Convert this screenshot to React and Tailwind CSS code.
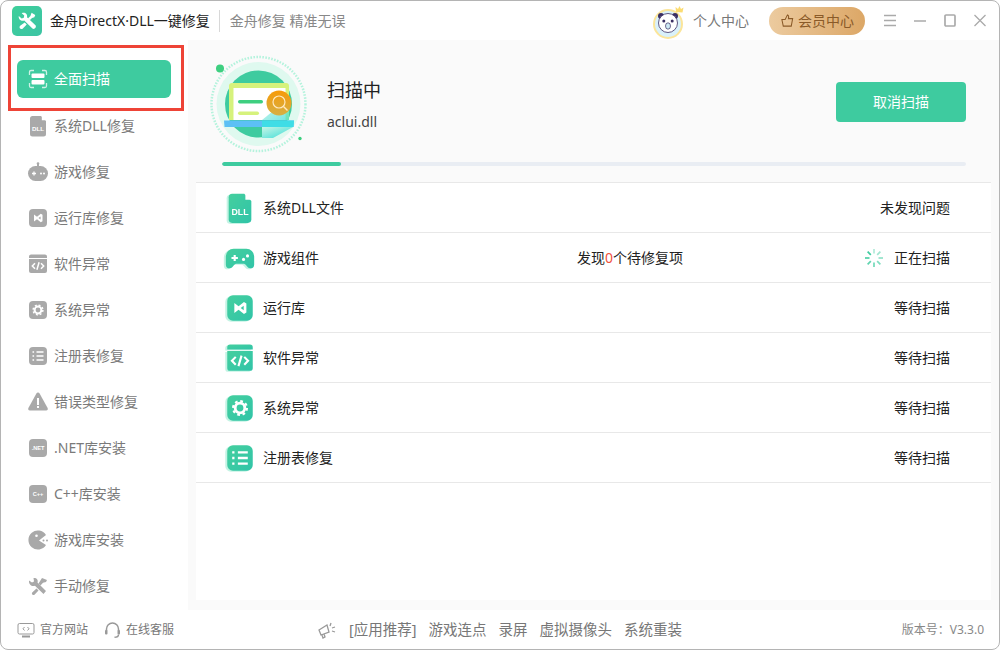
import React from "react";

const Doc = ({ c, t }) => (
    <>
        <path d="M6.500 2H15l5 5v13a2.500 2.500 0 0 1-2.500 2.500h-11A2.500 2.500 0 0 1 4 20V4.500A2.500 2.500 0 0 1 6.500 2z" fill={c} />
        <path d="M15.800 2l4.200 4.200h-4.200z" fill="#fff" />
        <text x="12" y="16.600" textAnchor="middle" fontSize="6.200" fontWeight="700" fontFamily="Liberation Sans" fill={t}>DLL</text>
    </>
);
const Game = ({ c, t }) => (
    <>
        <path d="M7.500 5.500h9a5.500 5.500 0 0 1 5.500 5.500v5.500a2.800 2.800 0 0 1-2.800 2.800c-1.500 0-2-1-3-2.300-.6-.7-1.200-1-2-1H9.800c-.8 0-1.400.3-2 1-1 1.300-1.500 2.300-3 2.300A2.800 2.800 0 0 1 2 16.500V11a5.500 5.500 0 0 1 5.500-5.500z" fill={c} />
        <path d="M6 12h4.500M8.250 9.800v4.400" stroke={t} strokeWidth="1.500" />
        <circle cx="14.500" cy="13" r="1.100" fill={t} />
        <circle cx="17.300" cy="10.500" r="1.100" fill={t} />
    </>
);
// the side menu uses a rounder pad with a nub on top
const Pad = ({ c, t }) => (
    <>
        <rect x="11" y="3" width="2" height="4" fill={c} />
        <circle cx="12" cy="3.500" r="1.300" fill={c} />
        <rect x="2" y="6" width="20" height="15" rx="7.500" fill={c} />
        <path d="M6 13.500h4M8 11.500v4" stroke={t} strokeWidth="1.300" />
        <circle cx="15" cy="13.500" r="1" fill={t} />
        <circle cx="18" cy="13.500" r="1" fill={t} />
    </>
);
const Box = ({ c, children }) => (
    <>
        <rect x="3" y="3" width="18" height="18" rx="4" fill={c} />
        {children}
    </>
);
const Vs = ({ c, t }) => (
    <Box c={c}>
        <path d="M8 8.500v7l3-2.200 3.800 2.900 1.700-1V8.800l-1.700-1L11 10.700z M14.600 10.400v3.200L12.500 12z" fill={t} fillRule="evenodd" />
    </Box>
);
const Code = ({ c, t }) => (
    <>
        <path d="M5 2.500h14a2 2 0 0 1 2 2v1.500H3V4.500a2 2 0 0 1 2-2z" fill={c} />
        <path d="M3 7h18v12a2 2 0 0 1-2 2H5a2 2 0 0 1-2-2z" fill={c} />
        <path d="M9 11.200L6.300 14 9 16.800M15 11.200l2.700 2.800-2.700 2.800M13.100 10.300l-2.200 7.400" stroke={t} strokeWidth="1.500" fill="none" />
    </>
);
const Gear = ({ c, t }) => (
    <Box c={c}>
        <circle cx="12" cy="12" r="3.400" fill="none" stroke={t} strokeWidth="2" />
        <circle cx="12" cy="12" r="4.900" fill="none" stroke={t} strokeWidth="1.500" strokeDasharray="1.950 1.900" />
    </Box>
);
const List = ({ c, t }) => (
    <Box c={c}>
        <path d="M10.500 8h7M10.500 12h7M10.500 16h7" stroke={t} strokeWidth="1.600" />
        <path d="M6.500 8h1.600M6.500 12h1.600M6.500 16h1.600" stroke={t} strokeWidth="1.600" />
    </Box>
);
const Warn = ({ c, t }) => (
    <>
        <path d="M12 2.500c.7 0 1.200.4 1.600 1l8 14.500c.6 1.200 0 2.500-1.500 2.500H3.900c-1.500 0-2.100-1.300-1.500-2.500l8-14.500c.4-.6.900-1 1.600-1z" fill={c} />
        <rect x="11" y="8" width="2" height="7" fill={t} />
        <rect x="11" y="16" width="2" height="2" fill={t} />
    </>
);
const Label = ({ c, t, s }) => (
    <Box c={c}>
        <text x="12" y="14" textAnchor="middle" fontSize="5.600" fontWeight="700" fontFamily="Liberation Sans" fill={t}>{s}</text>
    </Box>
);
const Pac = ({ c, t }) => (
    <>
        <path d="M20 7A9.500 9.500 0 1 0 20 17L13 12.600z" fill={c} />
        <circle cx="10.500" cy="7.800" r="1.300" fill={t} />
        <circle cx="17.500" cy="12.500" r="1" fill={c} />
        <circle cx="21" cy="12.500" r="1" fill={c} />
    </>
);
const Tools = ({ c }) => (
    <>
        <path d="M3 6.500l3 2 2-1-.5-3.500c3-.7 5 2 4 4.500L20 17l-2.500 3-8.600-8.200C6 13 2.500 10.500 3 6.500z" fill={c} />
        <path d="M16 4l5 2-1 2-3 .8-2.500 2.700-2-2zM10.500 14.500l2 2-4 4.200c-1.800 1-3.300-.7-2.300-2.300z" fill={c} />
    </>
);

const ScanIcon = () => (
    <svg width="24" height="24" viewBox="0 0 24 24" fill="none">
        <path d="M3.500 8V5a1.500 1.500 0 0 1 1.500-1.500h3M16 3.500h3A1.500 1.500 0 0 1 20.500 5v3M3.500 16v3A1.500 1.500 0 0 0 5 20.500h3M16 20.500h3a1.500 1.500 0 0 0 1.500-1.500v-3" stroke="#fff" strokeOpacity=".75" strokeWidth="1.300" />
        <rect x="5.500" y="6.500" width="13" height="4.500" rx="1" fill="#fff" />
        <rect x="5.500" y="13" width="13" height="4.500" rx="1" fill="#fff" />
    </svg>
);

const MENU = [
    ["系统DLL修复", (p) => <Doc {...p} />],
    ["游戏修复", (p) => <Pad {...p} />],
    ["运行库修复", (p) => <Vs {...p} />],
    ["软件异常", (p) => <Code {...p} />],
    ["系统异常", (p) => <Gear {...p} />],
    ["注册表修复", (p) => <List {...p} />],
    ["错误类型修复", (p) => <Warn {...p} />],
    [".NET库安装", (p) => <Label {...p} s=".NET" />],
    ["C++库安装", (p) => <Label {...p} s="C++" />],
    ["游戏库安装", (p) => <Pac {...p} />],
    ["手动修复", (p) => <Tools {...p} />],
];

const ROWS = [
    ["系统DLL文件", Doc, "未发现问题"],
    ["游戏组件", Game, "正在扫描"],
    ["运行库", Vs, "等待扫描"],
    ["软件异常", Code, "等待扫描"],
    ["系统异常", Gear, "等待扫描"],
    ["注册表修复", List, "等待扫描"],
];

function Spinner() {
    const lines = [0, 45, 90, 135, 180, 225, 270, 315];
    return (
        <svg width="20" height="20" viewBox="0 0 20 20">
            {lines.map((a, i) => (
                <line key={a} x1="10" y1="1" x2="10" y2="5.500" stroke="#3ecb9f" strokeWidth="1.700" opacity={0.4 + i * 0.085} transform={`rotate(${a} 10 10)`} />
            ))}
        </svg>
    );
}

function Illustration() {
    return (
        <svg width="100" height="100" viewBox="210 55 100 100">
            <defs>
                <linearGradient id="lapfold" x1="0" y1="0" x2="1" y2="1">
                    <stop offset="0" stopColor="#c8f5e6" />
                    <stop offset="1" stopColor="#35dcd6" />
                </linearGradient>
                <linearGradient id="lens" x1="0" y1="0" x2="0" y2="1">
                    <stop offset="0" stopColor="#f79a08" />
                    <stop offset="1" stopColor="#d5b045" />
                </linearGradient>
            </defs>
            <circle cx="258.500" cy="104" r="47" fill="none" stroke="#b5f3dd" strokeWidth="2.500" strokeDasharray="1.600 1.400" />
            <circle cx="258.500" cy="104" r="42" fill="#dff9ef" />
            <circle cx="258.500" cy="104" r="33.500" fill="#3ecb9f" />
            <circle cx="220" cy="68.500" r="4" fill="#3ecf80" />
            <circle cx="300" cy="138.500" r="1.700" fill="#3ecf80" />
            <path d="M229 120V86a3 3 0 0 1 3-3h54a3 3 0 0 1 3 3v34z" fill="#d6f27c" />
            <rect x="233.500" y="88" width="52" height="32" fill="#fff" />
            <rect x="238" y="100" width="25" height="3.400" rx="1.700" fill="#3ecf80" />
            <rect x="238" y="111.500" width="21" height="3.400" rx="1.700" fill="#d6f27c" />
            <path d="M262 120h27v-22l-27 22z" fill="url(#lapfold)" opacity=".7" />
            <path d="M224 120.500h70l-.5 6.500H224.500z" fill="#5cc0f5" />
            <path d="M262 120.500h32l-.5 6.500H262z" fill="#3fdde6" />
            <path d="M262 127h31l-20 11h-11z" fill="url(#lapfold)" />
            <circle cx="279" cy="103" r="12.500" fill="url(#lens)" />
            <circle cx="279" cy="102" r="6" fill="none" stroke="#ffe9c0" strokeWidth="1.200" />
            <path d="M283.500 106.500l4 4" stroke="#ffe9c0" strokeWidth="1.400" />
        </svg>
    );
}

function Avatar() {
    return (
        <svg width="36" height="36" viewBox="0 0 36 36">
            <circle cx="16" cy="21" r="15" fill="#fbe59a" />
            <circle cx="16" cy="21" r="13" fill="#d9f1fa" />
            <circle cx="9" cy="13" r="3" fill="#3b2f63" />
            <circle cx="23" cy="13" r="3" fill="#3b2f63" />
            <circle cx="16" cy="20" r="9.500" fill="#fff" stroke="#3b2f63" strokeWidth=".8" />
            <circle cx="11.800" cy="18" r="1.500" fill="#3b2f63" />
            <circle cx="20.200" cy="18" r="1.500" fill="#3b2f63" />
            <ellipse cx="16" cy="23" rx="2.500" ry="3.200" fill="#cfeaf5" stroke="#3b2f63" strokeWidth=".7" />
            <path d="M24 9l-.5-5 2.500 2 1.500-3 1.500 3 2.500-1.500-1 5z" fill="#fbdc72" />
        </svg>
    );
}

export default function App() {
    const sans = "font-['Noto_Sans','Noto_Sans_CJK_SC',sans-serif]";
    return (
        <div className={`w-[1000px] h-[650px] bg-white border border-[#b4b4b4] rounded-lg overflow-hidden flex flex-col ${sans}`}>
            {/* title bar */}
            <header className="h-[39px] shrink-0 flex items-center">
                <div className="ml-[11px] w-[30px] h-[30px] rounded-[5px] bg-gradient-to-br from-[#3ecf9a] to-[#3cc4a4] flex items-center justify-center">
                    <svg width="22" height="22" viewBox="0 0 24 24" fill="#fff">
                        <path d="M3 6.500l3.200 2.700 2.300-.8.500-2.300L6.200 3.500C9.500 1.800 13 4.500 12 8l9.500 9c1 2.500-1.500 4.500-3.600 3.300L9 11.500C5.500 12.500 2.500 10 3 6.500z" />
                        <path d="M17 3l4 2.500-1 2.500-2.500.8-2.500 2.500-2-2 2.700-2.700zM9.500 13.500l2.200 2.200-4.500 4.700c-2 1.200-4.200-.8-3-3z" />
                    </svg>
                </div>
                <span className="ml-2 text-sm text-[#222] whitespace-nowrap">金舟DirectX·DLL一键修复</span>
                <span className="ml-[9px] w-px h-[22px] bg-[#d8d8d8]" />
                <span className="ml-[10px] text-sm text-[#888] whitespace-nowrap">金舟修复 精准无误</span>
                <div className="ml-auto flex items-center">
                    <Avatar />
                    <span className="ml-[5px] text-sm text-[#777]">个人中心</span>
                    <div className="ml-5 w-[96px] h-7 rounded-full bg-gradient-to-r from-[#eccb9f] to-[#dca766] flex items-center justify-center gap-[3px] text-sm text-[#8a5a28]">
                        <svg width="15" height="15" viewBox="0 0 16 16" fill="none" stroke="#8a5a28" strokeWidth="1.100">
                            <path d="M2 7h3.500L8 2c1.500.5 1.500 2 1 4h4.500l-1.500 8H3.500z" />
                        </svg>
                        会员中心
                    </div>
                    <div className="ml-[19px] mr-[13px] flex items-center gap-[18px] text-[#aaa]">
                        <svg width="12" height="13" viewBox="0 0 12 13" stroke="currentColor" strokeWidth="1.400"><path d="M0 1.500h12M0 6.500h12M0 11.500h12" /></svg>
                        <svg width="12" height="13" viewBox="0 0 12 13" stroke="currentColor" strokeWidth="1.600"><path d="M0 7h12" /></svg>
                        <svg width="12" height="13" viewBox="0 0 12 13" fill="none" stroke="currentColor" strokeWidth="1.700"><rect x="1" y="1" width="10" height="11" rx="1" /></svg>
                        <svg width="12" height="13" viewBox="0 0 12 13" stroke="currentColor" strokeWidth="1.300"><path d="M.5 1l11 11M11.500 1L.5 12" /></svg>
                    </div>
                </div>
            </header>

            <div className="flex-1 flex min-h-0">
                {/* side menu */}
                <nav className="relative w-[187px] shrink-0 pt-5">
                    <div className="ml-4 w-[154px] h-[38px] rounded-md bg-[#3ecb9f] flex items-center pl-[9px] gap-1 text-sm text-white">
                        <ScanIcon />
                        全面扫描
                    </div>
                    <ul className="mt-[5px]">
                        {MENU.map(([name, icon]) => (
                            <li key={name} className="h-[46px] pl-[25px] flex items-center gap-1 text-sm text-[#7a7a7a] whitespace-nowrap">
                                <svg width="24" height="24" viewBox="0 0 24 24" className="shrink-0">{icon({ c: "#a9a9a9", t: "#fff" })}</svg>
                                {name}
                            </li>
                        ))}
                    </ul>
                    <div className="absolute left-[7px] top-[5px] w-[176px] h-[66px] border-[3px] border-[#ee4437]" />
                </nav>

                {/* main panel */}
                <main className="flex-1 min-w-0 bg-[#fafafa] flex flex-col">
                    <section className="h-[142px] shrink-0 pl-[22px] pt-[15px] pr-[33px]">
                        <div className="flex items-center h-[100px]">
                            <Illustration />
                            <div className="ml-[17px] -mt-px">
                                <div className="text-lg leading-[26px] text-[#222]">扫描中</div>
                                <div className="mt-[9px] text-sm text-[#444]">aclui.dll</div>
                            </div>
                            <button className="ml-auto -mt-[6px] w-[130px] h-10 rounded bg-[#3ecb9f] text-sm text-white">取消扫描</button>
                        </div>
                        <div className="ml-3 mt-[7px] h-1 rounded-full bg-[#e9edf3] overflow-hidden">
                            <div className="h-full w-[119px] rounded-full bg-[#3ecb9f]" />
                        </div>
                    </section>

                    <section className="flex-1 mx-2 mb-[10px] bg-white border-t border-[#e8e8e8]">
                        {ROWS.map(([name, Icon, status], i) => (
                            <div key={name} className="h-[50px] border-b border-[#e8e8e8] pl-[27px] pr-[41px] grid grid-cols-[354px_auto_1fr] items-center text-sm text-[#222]">
                                <div className="flex items-center gap-[6px]">
                                    <svg width="34" height="34" viewBox="0 0 24 24" className="shrink-0 drop-shadow-[-1.5px_1.5px_0_#c4f3e4]">
                                        <defs>
                                            <linearGradient id={`row${i}`} x1="0" y1="0" x2="1" y2="1">
                                                <stop offset="0" stopColor="#45cf9e" />
                                                <stop offset="1" stopColor="#30c4a8" />
                                            </linearGradient>
                                        </defs>
                                        <Icon c={`url(#row${i})`} t="#fff" />
                                    </svg>
                                    {name}
                                </div>
                                <div>
                                    {i === 1 && <>发现<span className="text-[#f0503c]">0</span>个待修复项</>}
                                </div>
                                <div className="flex items-center justify-end">
                                    {i === 1 && <span className="mr-[10px]"><Spinner /></span>}
                                    {status}
                                </div>
                            </div>
                        ))}
                    </section>
                </main>
            </div>

            {/* footer */}
            <footer className="h-[39px] shrink-0 flex items-center text-[#777] text-[14.5px] whitespace-nowrap">
                <div className="ml-4 flex items-center gap-[5px] text-xs">
                    <svg width="18" height="18" viewBox="0 0 18 18" fill="none" stroke="#999" strokeWidth="1"><rect x="1" y="2.500" width="16" height="10.500" rx="1.500" /><path d="M7.500 6L6 7.800l1.500 1.700M10.500 6L12 7.800l-1.500 1.700" /><path d="M5 15.500h8" strokeWidth="2" /></svg>
                    官方网站
                </div>
                <div className="ml-[16px] flex items-center gap-[5px] text-xs">
                    <svg width="17" height="18" viewBox="0 0 17 18" fill="none" stroke="#999" strokeWidth="1.500"><path d="M2.500 10V8a6 6 0 0 1 12 0v2" /><rect x="1" y="9" width="2.500" height="4.500" rx="1" fill="#999" stroke="none" /><rect x="13.500" y="9" width="2.500" height="4.500" rx="1" fill="#999" stroke="none" /><path d="M14.500 13.500c0 2-2 2.800-4 2.800" /></svg>
                    在线客服
                </div>
                <svg className="ml-[143px]" width="20" height="20" viewBox="0 0 20 20" fill="none" stroke="#999" strokeWidth="1.300"><path d="M2 10l8-5 2 7-8 3zM5 15l1 3 2-1-1-3M14 3l-1 3M18 7l-3 1M18 12l-3-1" /></svg>
                <span className="ml-3">[应用推荐]</span>
                <span className="ml-3">游戏连点</span>
                <span className="ml-3">录屏</span>
                <span className="ml-3">虚拟摄像头</span>
                <span className="ml-3">系统重装</span>
                <span className="ml-auto mr-[15px] text-xs text-[#888]">版本号：V3.3.0</span>
            </footer>
        </div>
    );
}
